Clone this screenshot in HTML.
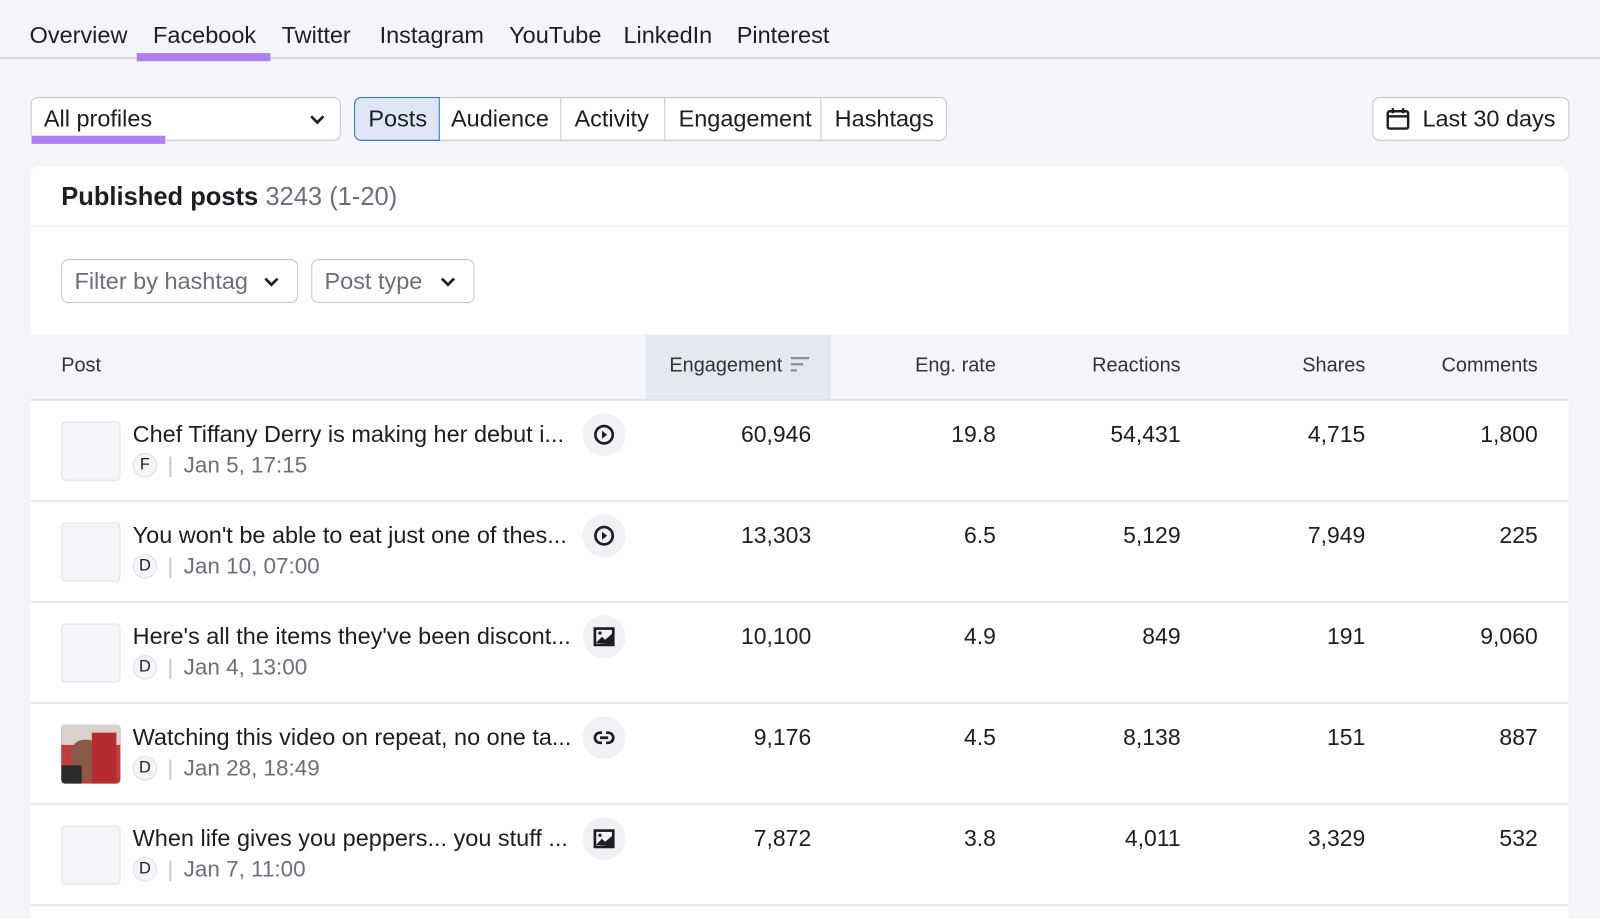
<!DOCTYPE html>
<html><head><meta charset="utf-8"><style>
*{box-sizing:border-box;margin:0;padding:0}
html,body{width:1600px;height:919px;overflow:hidden;background:#f4f5f9}
#w{position:absolute;left:0;top:0;width:1568px;height:900px;overflow:hidden;transform:scale(1.0204);transform-origin:0 0;font-family:"Liberation Sans",Arial,sans-serif;color:#1d1e22}
#in{position:absolute;left:0;top:0;width:1600px;height:900px}
.a{position:absolute;white-space:nowrap}
.tab{font-size:23px;top:21px}
.btn{border:1px solid #c4c7cf;background:#fff}
.card{left:30px;top:163px;width:1507px;height:737px;background:#fff;border-radius:8px 8px 0 0}
.num{font-size:22.5px;text-align:right}
.hd{font-size:19.5px;color:#333;top:347px}
.thumb{width:58px;height:58px;border:1px solid #dfe1e6;border-radius:4px;background:#f4f5f9}
.ttl{font-size:23px}
.meta{font-size:22px;color:#6c6e79}
.badge{width:24px;height:24px;border-radius:50%;border:1px solid #dcdfe6;background:#f4f5f9;font-size:16px;color:#1d1e22;text-align:center;line-height:22px}
.ic{width:42px;height:42px;border-radius:50%;background:#f0f1f5}
.ic svg{position:absolute;left:10px;top:10px}
.line{height:2px;background:#e6e8ee;left:30px;width:1507px}
</style></head><body><div id="w"><div id="in">
<div class="a tab" style="left:29px">Overview</div>
<div class="a tab" style="left:150px">Facebook</div>
<div class="a tab" style="left:276px">Twitter</div>
<div class="a tab" style="left:372px">Instagram</div>
<div class="a tab" style="left:499px">YouTube</div>
<div class="a tab" style="left:611px">LinkedIn</div>
<div class="a tab" style="left:722px">Pinterest</div>
<div class="a" style="left:0;top:56px;width:1600px;height:2px;background:#d6d8df"></div>
<div class="a" style="left:134px;top:52px;width:131px;height:8px;background:#b07ef5"></div>

<div class="a btn" style="left:30px;top:95px;width:304px;height:43px;border-radius:7px"></div>
<div class="a" style="left:43px;top:103px;font-size:23px">All profiles</div>
<svg class="a" style="left:302px;top:110px" width="18" height="14" viewBox="0 0 18 14"><path d="M3 4l6 6 6-6" stroke="#1d1e22" stroke-width="2.6" fill="none"/></svg>
<div class="a" style="left:31px;top:133px;width:131px;height:8px;background:#b07ef5"></div>

<div class="a btn" style="left:347px;top:95px;width:581px;height:43px;border-radius:7px"></div>
<div class="a" style="left:347px;top:95px;width:84px;height:43px;background:#dde7f7;border:1px solid #2f6ad6;border-radius:7px 0 0 7px"></div>
<div class="a" style="left:361px;top:103px;font-size:23px">Posts</div>
<div class="a" style="left:549px;top:96px;width:1px;height:41px;background:#c4c7cf"></div>
<div class="a" style="left:651px;top:96px;width:1px;height:41px;background:#c4c7cf"></div>
<div class="a" style="left:804px;top:96px;width:1px;height:41px;background:#c4c7cf"></div>
<div class="a" style="left:442px;top:103px;font-size:23px">Audience</div>
<div class="a" style="left:563px;top:103px;font-size:23px">Activity</div>
<div class="a" style="left:665px;top:103px;font-size:23px">Engagement</div>
<div class="a" style="left:818px;top:103px;font-size:23px">Hashtags</div>

<div class="a btn" style="left:1345px;top:95px;width:193px;height:43px;border-radius:7px"></div>
<svg class="a" style="left:1358px;top:104px" width="24" height="24" viewBox="0 0 24 24"><rect x="2" y="5" width="20" height="17" rx="2" stroke="#1d1e22" stroke-width="2.4" fill="none"/><path d="M2 10h20M7 2v5M17 2v5" stroke="#1d1e22" stroke-width="2.4"/></svg>
<div class="a" style="left:1394px;top:103px;font-size:23px">Last 30 days</div>

<div class="a card"></div>
<div class="a" style="left:60px;top:179px;font-size:25px"><b>Published posts</b> <span style="color:#6c6e79">3243 (1-20)</span></div>
<div class="a" style="left:30px;top:221px;width:1507px;height:1px;background:#e6e8ee"></div>

<div class="a btn" style="left:60px;top:254px;width:232px;height:43px;border-radius:7px"></div>
<div class="a" style="left:73px;top:262px;font-size:23px;color:#6c6e79">Filter by hashtag</div>
<svg class="a" style="left:257px;top:269px" width="18" height="14" viewBox="0 0 18 14"><path d="M3 4l6 6 6-6" stroke="#1d1e22" stroke-width="2.6" fill="none"/></svg>
<div class="a btn" style="left:305px;top:254px;width:160px;height:43px;border-radius:7px"></div>
<div class="a" style="left:318px;top:262px;font-size:23px;color:#6c6e79">Post type</div>
<svg class="a" style="left:430px;top:269px" width="18" height="14" viewBox="0 0 18 14"><path d="M3 4l6 6 6-6" stroke="#1d1e22" stroke-width="2.6" fill="none"/></svg>

<div class="a" style="left:30px;top:328px;width:1507px;height:64px;background:#f4f5f9"></div>
<div class="a" style="left:633px;top:328px;width:181px;height:64px;background:#e6e8ef"></div>
<div class="a" style="left:30px;top:391px;width:1507px;height:2px;background:#e0e2e8"></div>
<div class="a hd" style="left:60px">Post</div>
<div class="a hd" style="left:656px">Engagement</div>
<svg class="a" style="left:774px;top:349px" width="20" height="18" viewBox="0 0 20 18"><path d="M1 2h18M1 8h12M1 14h6" stroke="#8b8e99" stroke-width="2.2"/></svg>
<div class="a hd" style="right:624px">Eng. rate</div>
<div class="a hd" style="right:443px">Reactions</div>
<div class="a hd" style="right:262px">Shares</div>
<div class="a hd" style="right:93px">Comments</div>

<div class="a thumb" style="left:60px;top:413px"></div>
<div class="a ttl" style="left:130px;top:412px">Chef Tiffany Derry is making her debut i...</div>
<div class="a badge" style="left:130px;top:444px">F</div><div class="a meta" style="left:164px;top:443px;color:#c4c7cf">|</div><div class="a meta" style="left:180px;top:443px">Jan 5, 17:15</div>
<div class="a ic" style="left:571px;top:405px"><svg width="22" height="22" viewBox="0 0 22 22"><circle cx="11" cy="11" r="8.5" stroke="#1d1e22" stroke-width="2.6" fill="none"/><path d="M9 7l5 4-5 4z" fill="#1d1e22"/></svg></div>
<div class="a num" style="right:805px;top:413px">60,946</div><div class="a num" style="right:624px;top:413px">19.8</div><div class="a num" style="right:443px;top:413px">54,431</div><div class="a num" style="right:262px;top:413px">4,715</div><div class="a num" style="right:93px;top:413px">1,800</div>
<div class="a line" style="top:490px"></div>

<div class="a thumb" style="left:60px;top:512px"></div>
<div class="a ttl" style="left:130px;top:511px">You won't be able to eat just one of thes...</div>
<div class="a badge" style="left:130px;top:543px">D</div><div class="a meta" style="left:164px;top:542px;color:#c4c7cf">|</div><div class="a meta" style="left:180px;top:542px">Jan 10, 07:00</div>
<div class="a ic" style="left:571px;top:504px"><svg width="22" height="22" viewBox="0 0 22 22"><circle cx="11" cy="11" r="8.5" stroke="#1d1e22" stroke-width="2.6" fill="none"/><path d="M9 7l5 4-5 4z" fill="#1d1e22"/></svg></div>
<div class="a num" style="right:805px;top:512px">13,303</div><div class="a num" style="right:624px;top:512px">6.5</div><div class="a num" style="right:443px;top:512px">5,129</div><div class="a num" style="right:262px;top:512px">7,949</div><div class="a num" style="right:93px;top:512px">225</div>
<div class="a line" style="top:589px"></div>

<div class="a thumb" style="left:60px;top:611px"></div>
<div class="a ttl" style="left:130px;top:610px">Here's all the items they've been discont...</div>
<div class="a badge" style="left:130px;top:642px">D</div><div class="a meta" style="left:164px;top:641px;color:#c4c7cf">|</div><div class="a meta" style="left:180px;top:641px">Jan 4, 13:00</div>
<div class="a ic" style="left:571px;top:603px"><svg width="22" height="22" viewBox="0 0 22 22"><rect x="2" y="3" width="18" height="16" stroke="#1d1e22" stroke-width="2.6" fill="none"/><path d="M3 17l6-6 3 3 7-6v10z" fill="#1d1e22"/><circle cx="7" cy="7.5" r="1.6" fill="#1d1e22"/></svg></div>
<div class="a num" style="right:805px;top:611px">10,100</div><div class="a num" style="right:624px;top:611px">4.9</div><div class="a num" style="right:443px;top:611px">849</div><div class="a num" style="right:262px;top:611px">191</div><div class="a num" style="right:93px;top:611px">9,060</div>
<div class="a line" style="top:688px"></div>

<div class="a" style="left:60px;top:710px;width:58px;height:58px;border-radius:4px;overflow:hidden;background:#c23a3c">
<div class="a" style="left:0;top:0;width:58px;height:20px;background:#d9d2cc"></div>
<div class="a" style="left:10px;top:15px;width:28px;height:40px;border-radius:12px;background:#8a5a46"></div>
<div class="a" style="left:30px;top:8px;width:24px;height:50px;background:#b52b30"></div>
<div class="a" style="left:0;top:40px;width:20px;height:18px;background:#2a2a2a"></div>
</div>
<div class="a ttl" style="left:130px;top:709px">Watching this video on repeat, no one ta...</div>
<div class="a badge" style="left:130px;top:741px">D</div><div class="a meta" style="left:164px;top:740px;color:#c4c7cf">|</div><div class="a meta" style="left:180px;top:740px">Jan 28, 18:49</div>
<div class="a ic" style="left:571px;top:702px"><svg width="22" height="22" viewBox="0 0 22 22"><path d="M9 6H7a5 5 0 000 10h2M13 6h2a5 5 0 010 10h-2M7 11h8" stroke="#1d1e22" stroke-width="2.6" fill="none"/></svg></div>
<div class="a num" style="right:805px;top:710px">9,176</div><div class="a num" style="right:624px;top:710px">4.5</div><div class="a num" style="right:443px;top:710px">8,138</div><div class="a num" style="right:262px;top:710px">151</div><div class="a num" style="right:93px;top:710px">887</div>
<div class="a line" style="top:787px"></div>

<div class="a thumb" style="left:60px;top:809px"></div>
<div class="a ttl" style="left:130px;top:808px">When life gives you peppers... you stuff ...</div>
<div class="a badge" style="left:130px;top:840px">D</div><div class="a meta" style="left:164px;top:839px;color:#c4c7cf">|</div><div class="a meta" style="left:180px;top:839px">Jan 7, 11:00</div>
<div class="a ic" style="left:571px;top:801px"><svg width="22" height="22" viewBox="0 0 22 22"><rect x="2" y="3" width="18" height="16" stroke="#1d1e22" stroke-width="2.6" fill="none"/><path d="M3 17l6-6 3 3 7-6v10z" fill="#1d1e22"/><circle cx="7" cy="7.5" r="1.6" fill="#1d1e22"/></svg></div>
<div class="a num" style="right:805px;top:809px">7,872</div><div class="a num" style="right:624px;top:809px">3.8</div><div class="a num" style="right:443px;top:809px">4,011</div><div class="a num" style="right:262px;top:809px">3,329</div><div class="a num" style="right:93px;top:809px">532</div>
<div class="a line" style="top:886px"></div>
</div></div></body></html>
